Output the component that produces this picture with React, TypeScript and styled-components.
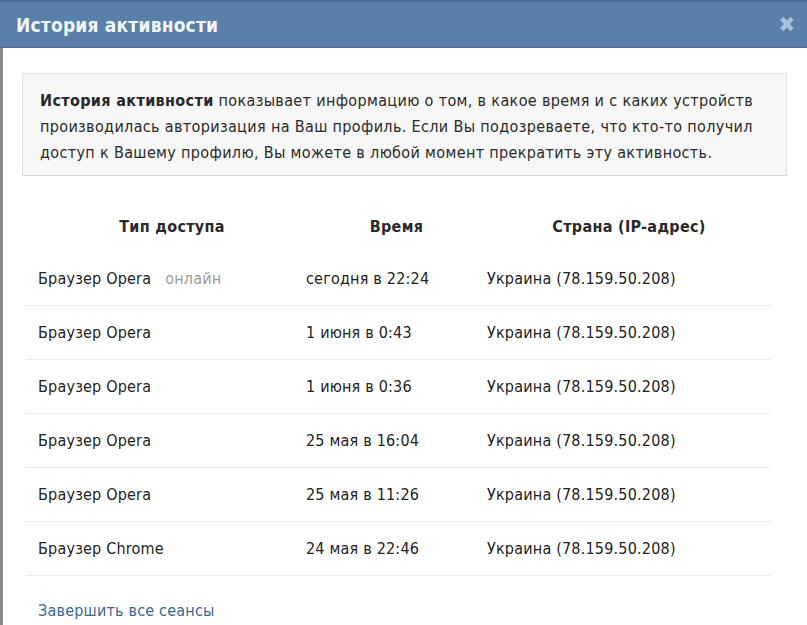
import styled, { createGlobalStyle } from 'styled-components'

const GlobalStyle = createGlobalStyle`
  html, body {
    margin: 0;
    padding: 0;
    background: #ffffff;
  }
  body {
    font-family: 'DejaVu Sans Condensed', 'DejaVu Sans', sans-serif;
    color: #222;
  }
`

const Box = styled.div`
  width: 807px;
  height: 625px;
  overflow: hidden;
  background: #fff;
  box-sizing: border-box;
`

const Header = styled.div`
  height: 48px;
  background: #5a7fa8;
  border-top: 2px solid #4d6f96;
  border-bottom: 1px solid #4a6c92;
  box-sizing: border-box;
  display: flex;
  align-items: center;
  justify-content: space-between;
  padding: 0 12px 0 16px;
`

const Title = styled.div`
  color: #f2f6fa;
  font-size: 19px;
  font-weight: bold;
  letter-spacing: 0.2px;
`

const Close = styled.div`
  color: #a9c0dc;
  font-size: 22px;
  font-weight: bold;
  line-height: 1;
`

const Body = styled.div`
  border-left: 3px solid #8a8a8a;
  height: 577px;
  box-sizing: border-box;
  padding: 25px 20px 0 19px;
`

const Info = styled.div`
  background: #f7f7f7;
  border: 1px solid #e2e2e2;
  border-bottom-color: #d6d6d6;
  padding: 14px 17px 12px 17px;
  font-size: 16px;
  letter-spacing: 0.35px;
  line-height: 26px;
  color: #2a2a2a;
  height: 103px;
  box-sizing: border-box;
  white-space: nowrap;
`

const Table = styled.div`
  margin: 24px 16px 0 4px;
`

const Row = styled.div<{ $head?: boolean }>`
  display: grid;
  grid-template-columns: 268px 181px 1fr;
  align-items: center;
  height: ${(p) => (p.$head ? '52px' : '54px')};
  padding-left: 12px;
  border-bottom: ${(p) => (p.$head ? 'none' : '1px solid #e9edf1')};
  box-sizing: border-box;
  font-size: 16px;
  letter-spacing: 0.2px;
  color: #222;
`

const HeadCell = styled.div`
  text-align: center;
  font-weight: bold;
  font-size: 16px;
  letter-spacing: 0.3px;
  color: #2a2a2a;
`

const Cell = styled.div``

const Online = styled.span`
  color: #9a9a9a;
  margin-left: 14px;
`

const Link = styled.a`
  display: block;
  margin: 25px 0 0 16px;
  color: #3b6694;
  font-size: 16px;
  letter-spacing: 0.2px;
  text-decoration: none;
`

const rows = [
  { type: 'Браузер Opera', online: true, time: 'сегодня в 22:24' },
  { type: 'Браузер Opera', time: '1 июня в 0:43' },
  { type: 'Браузер Opera', time: '1 июня в 0:36' },
  { type: 'Браузер Opera', time: '25 мая в 16:04' },
  { type: 'Браузер Opera', time: '25 мая в 11:26' },
  { type: 'Браузер Chrome', time: '24 мая в 22:46' },
]

export default function App() {
  return (
    <Box>
      <GlobalStyle />
      <Header>
        <Title>История активности</Title>
        <Close>✖</Close>
      </Header>
      <Body>
        <Info>
          <b>История активности</b> показывает информацию о том, в какое время и с каких устройств
          <br />
          производилась авторизация на Ваш профиль. Если Вы подозреваете, что кто-то получил
          <br />
          доступ к Вашему профилю, Вы можете в любой момент прекратить эту активность.
        </Info>
        <Table>
          <Row $head>
            <HeadCell>Тип доступа</HeadCell>
            <HeadCell>Время</HeadCell>
            <HeadCell>Страна (IP-адрес)</HeadCell>
          </Row>
          {rows.map((r, i) => (
            <Row key={i}>
              <Cell>
                {r.type}
                {r.online && <Online>онлайн</Online>}
              </Cell>
              <Cell>{r.time}</Cell>
              <Cell>Украина (78.159.50.208)</Cell>
            </Row>
          ))}
        </Table>
        <Link href="#">Завершить все сеансы</Link>
      </Body>
    </Box>
  )
}
